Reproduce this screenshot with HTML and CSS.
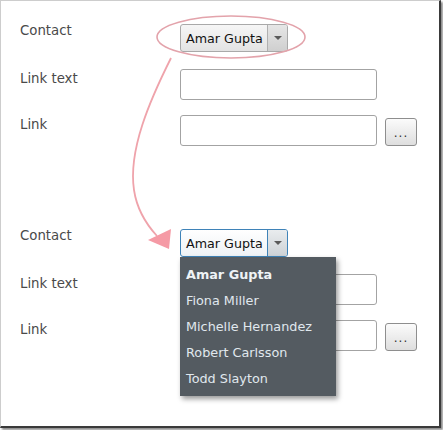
FILE: index.html
```html
<!DOCTYPE html>
<html>
<head>
<meta charset="utf-8">
<link rel="stylesheet" href="styles.css">
</head>
<body>
<div class="frame">
  <div class="form">
    <div class="label">Contact</div>
    <div class="ctrl">
      <div class="select">
        <span class="sel-text">Amar Gupta</span>
        <span class="sel-arrow"><span class="tri"></span></span>
      </div>
    </div>
    <div class="label">Link text</div>
    <div class="ctrl"><div class="input"></div></div>
    <div class="label">Link</div>
    <div class="ctrl"><div class="input"></div><div class="btn">...</div></div>
  </div>

  <div class="form second">
    <div class="label">Contact</div>
    <div class="ctrl">
      <div class="select-wrap">
        <div class="select focused">
          <span class="sel-text">Amar Gupta</span>
          <span class="sel-arrow"><span class="tri"></span></span>
        </div>
        <ul class="menu">
          <li class="selected">Amar Gupta</li>
          <li>Fiona Miller</li>
          <li>Michelle Hernandez</li>
          <li>Robert Carlsson</li>
          <li>Todd Slayton</li>
        </ul>
      </div>
    </div>
    <div class="label">Link text</div>
    <div class="ctrl"><div class="input"></div></div>
    <div class="label">Link</div>
    <div class="ctrl"><div class="input"></div><div class="btn">...</div></div>
  </div>

  <svg class="annot" width="443" height="430" viewBox="0 0 443 430">
    <ellipse cx="231" cy="37" rx="74" ry="21" fill="none" stroke="#e3a3ab" stroke-width="1.6"/>
    <path d="M171,58 C150,100 128,150 134,190 C137,210 146,224 157,236" fill="none" stroke="#efa3ab" stroke-width="1.8"/>
    <polygon points="148,240 171,229 169,249" fill="#f59aa5"/>
  </svg>
</div>
</body>
</html>
```
FILE: styles.css
```css
html, body {
  margin: 0;
  padding: 0;
  background: #fff;
}
body {
  width: 443px;
  height: 430px;
  overflow: hidden;
  font-family: "DejaVu Sans", Verdana, sans-serif;
}
.frame {
  position: relative;
  box-sizing: border-box;
  width: 441px;
  height: 428px;
  background: #fff;
  border-top: 1px solid #cdcdcd;
  border-left: 1px solid #cdcdcd;
  border-right: 2px solid #3a3a3a;
  border-bottom: 2px solid #3a3a3a;
  box-shadow: 2px 2px 2px rgba(0,0,0,0.45);
  padding: 20px 0 0 19px;
}
.form {
  display: grid;
  grid-template-columns: 160px auto;
  row-gap: 15px;
  align-items: start;
}
.form.second {
  margin-top: 80px;
}
.label {
  font-size: 13.3px;
  line-height: 16px;
  padding-top: 2px;
  color: #4a4a4a;
}
.ctrl {
  display: flex;
  align-items: center;
}
.select-wrap {
  position: relative;
}
.select {
  box-sizing: border-box;
  display: flex;
  width: 108px;
  height: 28px;
  margin-top: 3px;
  margin-bottom: 2px;
  border: 1px solid #a9a9a9;
  border-radius: 3px;
  background: linear-gradient(#f6f6f6, #e3e3e3);
  overflow: hidden;
}
.sel-text {
  flex: 1;
  display: flex;
  align-items: center;
  padding-left: 5px;
  font-size: 12.7px;
  color: #111;
  white-space: nowrap;
}
.sel-arrow {
  width: 19px;
  border-left: 1px solid #b0b0b0;
  background: linear-gradient(#e6e6e6, #cfcfcf);
  display: flex;
  align-items: center;
  justify-content: center;
}
.tri {
  width: 0;
  height: 0;
  border-left: 4px solid transparent;
  border-right: 4px solid transparent;
  border-top: 4px solid #5a5a5a;
}
.select.focused {
  border-color: #3f83b8;
  background: linear-gradient(#ffffff, #eef2f5);
}
.select.focused .sel-arrow {
  border-left-color: #3f83b8;
  background: linear-gradient(#e9ecee, #cdd2d6);
}
.menu {
  position: absolute;
  top: 100%;
  left: 0;
  margin: -2px 0 0 0;
  padding: 5px 0 4px 0;
  list-style: none;
  width: 156px;
  background: #545b61;
  box-shadow: 2px 3px 5px rgba(0,0,0,0.4);
  z-index: 2;
}
.menu li {
  height: 26px;
  line-height: 26px;
  padding-left: 6px;
  font-size: 12.8px;
  color: #e0e8ee;
  white-space: nowrap;
}
.menu li.selected {
  font-weight: bold;
  color: #eef3f6;
}
.input {
  box-sizing: border-box;
  width: 197px;
  height: 31px;
  border: 1px solid #a3a3a3;
  border-radius: 3px;
  background: #fff;
}
.btn {
  box-sizing: border-box;
  width: 32px;
  height: 28px;
  margin-left: 8px;
  margin-top: 3px;
  border: 1px solid #8e8e8e;
  border-radius: 3px;
  background: linear-gradient(#fbfbfb, #dedede);
  font-size: 12px;
  color: #333;
  display: flex;
  justify-content: center;
  align-items: flex-end;
  padding-bottom: 5px;
  letter-spacing: 1px;
}
.annot {
  position: absolute;
  left: -1px;
  top: -1px;
  pointer-events: none;
  z-index: 3;
}
```
